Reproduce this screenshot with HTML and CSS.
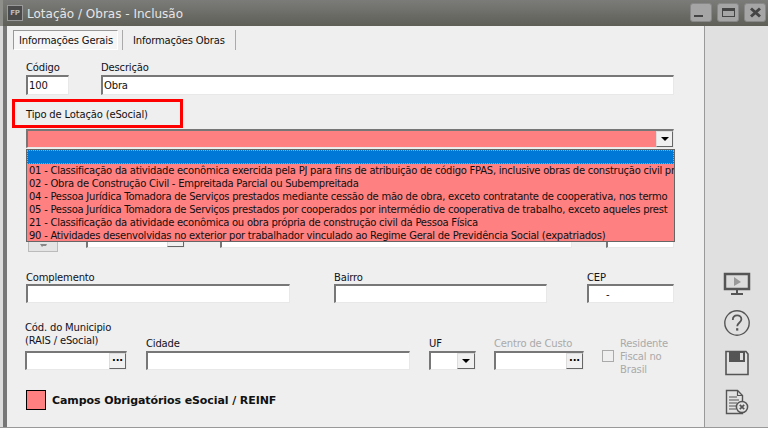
FILE: index.html
```html
<!DOCTYPE html>
<html lang="pt">
<head>
<meta charset="utf-8">
<title>Lotação / Obras - Inclusão</title>
<link rel="stylesheet" href="styles.css">
</head>
<body>
<div class="window">
  <header class="titlebar">
    <span class="app-icon">FP</span>
    <span class="title">Lotação / Obras - Inclusão</span>
    <div class="win-buttons">
      <span class="win-btn"><svg width="22" height="19" viewBox="0 0 22 19"><rect x="4" y="12" width="9" height="2" fill="#444"/></svg></span>
      <span class="win-btn"><svg width="22" height="19" viewBox="0 0 22 19"><rect x="5.5" y="5.5" width="12" height="8" fill="none" stroke="#444" stroke-width="1"/><rect x="5" y="5" width="13" height="3" fill="#444"/></svg></span>
      <span class="win-btn"><svg width="22" height="19" viewBox="0 0 22 19"><path d="M7 5.5l9 8M16 5.5l-9 8" stroke="#444" stroke-width="3" fill="none"/></svg></span>
    </div>
  </header>
  <div class="content">
    <main class="main">
      <nav class="tabs">
        <span class="tab tab-active">Informações Gerais</span>
        <span class="tab">Informações Obras</span>
      </nav>
      <div class="form">
        <div class="row row-first">
          <div class="field w43"><label>Código</label><div class="input"><span class="value">100</span></div></div>
          <div class="field w573 ml32"><label>Descrição</label><div class="input"><span class="value">Obra</span></div></div>
        </div>
        <div class="highlight"><span>Tipo de Lotação (eSocial)</span></div>
        <div class="combo-wrap">
          <div class="combo">
            <span class="drop-btn"><i class="arrow"></i></span>
          </div>
          <ul class="listbox">
            <li class="selected"></li>
            <li>01 - Classificação da atividade econômica exercida pela PJ para fins de atribuição de código FPAS, inclusive obras de construção civil pr</li>
            <li>02 - Obra de Construção Civil - Empreitada Parcial ou Subempreitada</li>
            <li>04 - Pessoa Jurídica Tomadora de Serviços prestados mediante cessão de mão de obra, exceto contratante de cooperativa, nos termo</li>
            <li>05 - Pessoa Jurídica Tomadora de Serviços prestados por cooperados por intermédio de cooperativa de trabalho, exceto aqueles prest</li>
            <li>21 - Classificação da atividade econômica ou obra própria de construção civil da Pessoa Física</li>
            <li>90 - Atividades desenvolvidas no exterior por trabalhador vinculado ao Regime Geral de Previdência Social (expatriados)</li>
          </ul>
        </div>
        <div class="row row-hidden">
          <span class="square-btn"><svg width="28" height="21" viewBox="0 0 28 21"><path d="M11 14h7l-1 2h-3l-1 1z" fill="#888"/></svg></span>
          <div class="input h19 w99 ml28"><span class="dots-btn"></span></div>
          <div class="input h19 w352 ml35"></div>
          <div class="input h19 w68 ml34"></div>
        </div>
        <div class="row row-address">
          <div class="field w264"><label>Complemento</label><div class="input h19"></div></div>
          <div class="field w213 ml44"><label>Bairro</label><div class="input h19"></div></div>
          <div class="field w87 ml40"><label>CEP</label><div class="input h19"><span class="value cep">-</span></div></div>
        </div>
        <div class="row row-city">
          <div class="field w102 shift-left"><label>Cód. do Municipio<br>(RAIS / eSocial)</label><div class="input h19"><span class="dots-btn">···</span></div></div>
          <div class="field w264 ml19"><label>Cidade</label><div class="input h19"></div></div>
          <div class="field w47 ml19"><label>UF</label><div class="input h19"><span class="drop-btn small"><i class="arrow"></i></span></div></div>
          <div class="field w90 ml18"><label class="disabled">Centro de Custo</label><div class="input h19"><span class="dots-btn">···</span></div></div>
          <div class="residente">
            <span class="checkbox"></span>
            <span class="disabled check-label">Residente<br>Fiscal no<br>Brasil</span>
          </div>
        </div>
        <div class="legend">
          <span class="swatch"></span>
          <strong>Campos Obrigatórios eSocial / REINF</strong>
        </div>
      </div>
    </main>
    <aside class="sidebar">
      <svg width="28" height="24" viewBox="0 0 28 24"><path d="M2 2h24v15H2z" fill="#dcdcdc" stroke="#555" stroke-width="2.5"/><path d="M11 5l7 5-7 4z" fill="#999"/><path d="M14 18v3M8 22h12" stroke="#555" stroke-width="2" fill="none"/></svg>
      <svg width="28" height="28" viewBox="0 0 28 28"><circle cx="14" cy="14" r="12.2" fill="none" stroke="#555" stroke-width="1.4"/><path d="M9.8 11c0-3 2-4.6 4.4-4.6s4.2 1.6 4.2 3.8c0 3.4-4.2 3.6-4.2 7" fill="none" stroke="#555" stroke-width="1.8"/><rect x="13.1" y="19.2" width="2.2" height="2.4" fill="#555"/></svg>
      <svg width="26" height="26" viewBox="0 0 26 26"><path d="M2 1.5h20l2 2.5v20.5H2z" fill="#e2e2e2" stroke="#555" stroke-width="1.6"/><path d="M5 2h16v10H5z" fill="#555"/><rect x="16" y="3" width="3" height="7" fill="#ddd"/></svg>
      <svg width="24" height="26" viewBox="0 0 24 26"><path d="M1.5 1.5h11l5 5v18h-16z" fill="#e2e2e2" stroke="#555" stroke-width="1.4"/><path d="M12.5 1.5v5h5" fill="none" stroke="#555" stroke-width="1.2"/><path d="M4 8h8M4 11h10M4 14h8M4 17h7M4 20h7" stroke="#555" stroke-width="1.2"/><circle cx="17" cy="18" r="5.6" fill="#e2e2e2" stroke="#555" stroke-width="1.5"/><path d="M14.8 15.8l4.4 4.4M19.2 15.8l-4.4 4.4" stroke="#555" stroke-width="1.7"/></svg>
    </aside>
  </div>
</div>
</body>
</html>
```
FILE: styles.css
```css
* { box-sizing: border-box; }
html, body { margin: 0; padding: 0; }
body {
  width: 768px;
  height: 428px;
  overflow: hidden;
  background: #efefef;
  font-family: "DejaVu Sans", Tahoma, sans-serif;
  font-size: 10px;
  letter-spacing: -.17px;
  color: #111;
}
.window { display: flex; flex-direction: column; width: 768px; height: 428px; }

.titlebar {
  height: 26px;
  flex: none;
  display: flex;
  align-items: center;
  padding-left: 4px;
  border-left: 3px solid #8e8e8a;
  background: linear-gradient(#7b7b79, #5f5f58);
}
.app-icon {
  width: 16px;
  height: 16px;
  background: #4a4a4a;
  border: 1px solid #999;
  color: #bbb;
  font-size: 7px;
  font-weight: bold;
  line-height: 14px;
  text-align: center;
}
.title {
  margin-left: 4px;
  padding-top: 1px;
  font-size: 12px;
  letter-spacing: 0;
  color: #e6e6e6;
}
.win-buttons { margin-left: auto; display: flex; gap: 5px; margin-right: 2px; margin-bottom: 1px; }
.win-btn {
  width: 22px;
  height: 19px;
  background: #a5a5a5;
  border: 1px solid #888;
  border-radius: 3px;
  display: block;
}
.win-btn svg { display: block; margin: -1px; }

.content { flex: 1; display: flex; min-height: 0; border-bottom: 1px solid #999; background: #dcdcdc; }
.main {
  flex: 1;
  min-width: 0;
  margin-left: 3px;
  border-left: 4px solid #777;
  background: #efefef;
  position: relative;
}
.sidebar {
  width: 64px;
  flex: none;
  background: #e0e0e0;
  border-left: 1px solid #999;
  display: flex;
  flex-direction: column;
  align-items: center;
  padding-top: 246px;
  gap: 13px;
}

.tabs { display: flex; height: 26px; padding: 4px 0 0 6px; align-items: flex-start; }
.tab {
  height: 20px;
  line-height: 21px;
  padding: 0 6px;
  white-space: nowrap;
}
.tab-active {
  width: 105px;
  background: #f6f6f6;
  border: 1px solid #999;
  border-right-color: #fff;
  border-bottom-color: #fff;
  line-height: 19px;
  padding: 0 5px;
}
.tab:not(.tab-active) {
  margin-left: 4px;
  width: 114px;
  padding-left: 10px;
  border-left: 1px solid #aaa;
  border-right: 1px solid #aaa;
}

.form { padding-left: 19px; }
.row { display: flex; align-items: flex-end; }
.row-first { height: 43px; }
.field { display: flex; flex-direction: column; }
.field label { line-height: 13px; margin-bottom: 1px; color: #112; white-space: nowrap; }
.field label.disabled { color: #aaa; }
.disabled { color: #aaa; }

.input {
  position: relative;
  height: 20px;
  background: #fff;
  border: 2px solid #e8e8e8;
  border-top-color: #777;
  border-left-color: #777;
  border-right-width: 1px;
  border-bottom-width: 1px;
}
.h19 { height: 19px; }
.value { display: block; padding-left: 1px; line-height: 17px; }
.cep { padding-left: 17px; }
.w43 { width: 43px; }
.w47 { width: 47px; }
.w68 { width: 68px; }
.w87 { width: 87px; }
.w90 { width: 90px; }
.w99 { width: 99px; }
.w102 { width: 102px; }
.w213 { width: 213px; }
.w264 { width: 264px; }
.w352 { width: 352px; }
.w573 { width: 573px; }
.ml18 { margin-left: 18px; }
.ml19 { margin-left: 19px; }
.ml28 { margin-left: 28px; }
.ml32 { margin-left: 32px; }
.ml34 { margin-left: 34px; }
.ml35 { margin-left: 35px; }
.ml40 { margin-left: 40px; }
.ml44 { margin-left: 44px; }

.highlight {
  margin: 4px 0 1px -14px;
  width: 171px;
  height: 29px;
  border: 3px solid #f00;
  padding-left: 11px;
  line-height: 25px;
}

.combo-wrap { position: relative; width: 648px; }
.combo {
  height: 19px;
  background: #ff8080;
  border: 2px solid #e8e8e8;
  border-top-color: #777;
  border-left-color: #777;
  border-right-width: 1px;
  border-bottom-width: 1px;
  position: relative;
}
.drop-btn {
  position: absolute;
  right: 0;
  top: 0;
  width: 17px;
  height: 16px;
  background: #f0f0f0;
  border: 1px solid #ddd;
  border-right-color: #666;
  border-bottom-color: #666;
  display: flex;
  align-items: center;
  justify-content: center;
}
.drop-btn.small { width: 18px; }
.arrow {
  width: 0;
  height: 0;
  border-left: 4px solid transparent;
  border-right: 4px solid transparent;
  border-top: 4px solid #000;
}
.dots-btn {
  position: absolute;
  right: 0;
  top: 0;
  width: 17px;
  height: 16px;
  background: #f0f0f0;
  border: 1px solid #ddd;
  border-right-color: #666;
  border-bottom-color: #666;
  font-weight: bold;
  font-size: 10px;
  line-height: 13px;
  text-align: center;
  color: #000;
}
.listbox {
  position: absolute;
  left: 0;
  top: 20px;
  z-index: 2;
  width: 649px;
  height: 93px;
  margin: 0;
  padding: 0;
  list-style: none;
  overflow: hidden;
  background: #ff8080;
  border: 1px solid #666;
}
.listbox li { height: 13px; line-height: 13px; padding-left: 2px; white-space: nowrap; letter-spacing: -.25px; color: #101010; }
.listbox .selected { background: #0078d7; outline: 1px dotted #d9a040; outline-offset: -1px; height: 13.5px; }

.row-hidden { margin-top: 81px; height: 23px; align-items: flex-start; }
.square-btn { width: 30px; height: 23px; margin-left: 2px; background: #e4e4e4; border: 1px solid #bbb; }
.square-btn svg { display: block; }
.row-address { margin-top: 19px; }
.row-address .field label { margin-bottom: 0; }
.row-city { margin-top: 18px; position: relative; }
.shift-left { margin-left: -1px; }
.field.shift-left label { margin-bottom: 4px; }
.residente { display: flex; align-items: center; margin-left: 18px; margin-bottom: -6px; }
.checkbox { width: 12px; height: 12px; border: 1px solid #aaa; background: #efefef; }
.check-label { margin-left: 6px; line-height: 13px; padding-top: 2px; }

.legend { display: flex; align-items: center; margin-top: 20px; gap: 6px; }
.swatch { width: 20px; height: 20px; background: #ff8080; border: 1px solid #000; }
.legend strong { font-size: 11px; letter-spacing: -.09px; color: #111; }
```
